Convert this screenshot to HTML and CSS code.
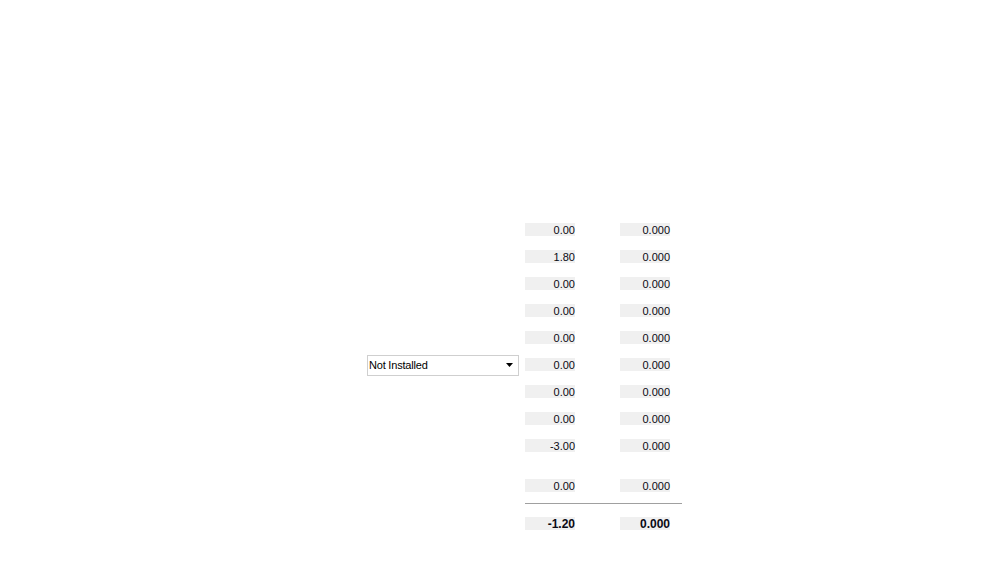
FILE: index.html
```html
<!DOCTYPE html>
<html>
<head>
<meta charset="utf-8">
<link rel="stylesheet" href="styles.css">
</head>
<body>
<div class="panel">
  <div class="row"><div class="slot"></div><div class="val">0.00</div><div class="val">0.000</div></div>
  <div class="row"><div class="slot"></div><div class="val">1.80</div><div class="val">0.000</div></div>
  <div class="row"><div class="slot"></div><div class="val">0.00</div><div class="val">0.000</div></div>
  <div class="row"><div class="slot"></div><div class="val">0.00</div><div class="val">0.000</div></div>
  <div class="row"><div class="slot"></div><div class="val">0.00</div><div class="val">0.000</div></div>
  <div class="row">
    <div class="slot">
      <div class="select"><span>Not Installed</span><svg class="arrow" width="7" height="4" viewBox="0 0 7 4"><path d="M0 0H7L3.5 4Z" fill="#000"/></svg></div>
    </div>
    <div class="val">0.00</div><div class="val">0.000</div>
  </div>
  <div class="row"><div class="slot"></div><div class="val">0.00</div><div class="val">0.000</div></div>
  <div class="row"><div class="slot"></div><div class="val">0.00</div><div class="val">0.000</div></div>
  <div class="row"><div class="slot"></div><div class="val">-3.00</div><div class="val">0.000</div></div>
  <div class="row spaced"><div class="slot"></div><div class="val">0.00</div><div class="val">0.000</div></div>
  <div class="rule-row"><div class="slot"></div><div class="rule"></div></div>
  <div class="row total"><div class="slot"></div><div class="val">-1.20</div><div class="val">0.000</div></div>
</div>
</body>
</html>
```

FILE: styles.css
```css
html, body {
  margin: 0;
  padding: 0;
  background: #ffffff;
}
body {
  font-family: "Liberation Sans", Arial, sans-serif;
  font-size: 11px;
  color: #000;
}
.panel {
  padding: 223px 0 0 367px;
  display: flex;
  flex-direction: column;
}
.row {
  display: flex;
  align-items: center;
  height: 13px;
  margin-bottom: 14px;
}
.row.spaced {
  margin-top: 13px;
  margin-bottom: 11px;
}
.slot {
  width: 152px;
  margin-right: 6px;
  flex: none;
  display: flex;
  align-items: center;
}
.val {
  box-sizing: border-box;
  width: 50px;
  height: 13px;
  padding-top: 1px;
  line-height: 13px;
  background: #f0f0f0;
  text-align: right;
  flex: none;
  color: #0a0a14;
  overflow: visible;
}
.val + .val {
  margin-left: 45px;
}
.total .val {
  font-weight: bold;
  font-size: 12px;
}
.rule-row {
  display: flex;
  height: 1px;
  margin-bottom: 13px;
}
.rule {
  width: 157px;
  height: 1px;
  background: #a0a0a0;
}
.select {
  box-sizing: border-box;
  width: 152px;
  height: 21px;
  margin-top: 1px;
  border: 1px solid #cfcfcf;
  background: #fff;
  display: flex;
  align-items: center;
  justify-content: space-between;
  padding: 0 5px 0 1px;
  font-size: 11px;
  letter-spacing: -0.2px;
  color: #000;
}
.arrow {
  display: block;
}
```
